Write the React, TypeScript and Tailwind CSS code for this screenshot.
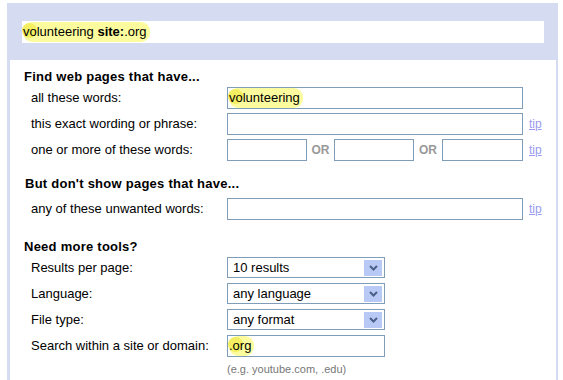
import React from "react";

const font = "font-['Liberation_Sans',Arial,sans-serif]";

const Highlight = ({ children }: { children: React.ReactNode }) => (
    <span className="relative inline-block rounded-[9px] bg-[#fcfc9e] pr-[3px]">
        <span className="absolute left-[-1px] top-[1px] h-[15px] w-[15px] rounded-full bg-[#f4ee62]" />
        <span className="relative">{children}</span>
    </span>
);

const Tip = () => (
    <a className="ml-[6px] text-[12px] text-[#9a9af0] underline" href="#">
        tip
    </a>
);

const TextBox = ({ w, children }: { w: string; children?: React.ReactNode }) => (
    <div className={`${w} flex h-[22px] items-center border border-[#7f9db9] bg-white pl-[1px] text-[13px] text-black`}>
        {children}
    </div>
);

const SelectBox = ({ value }: { value: string }) => (
    <div className="flex h-[21px] w-[158px] items-center justify-between border border-[#7f9db9] bg-white pl-[5px] pr-[2px] text-[13px] text-black">
        <span>{value}</span>
        <span className="flex h-[16px] w-[18px] items-center justify-center bg-[#b8c9f6]">
            <svg width="9" height="6" viewBox="0 0 9 6">
                <path d="M1 1 L4.5 4.5 L8 1" fill="none" stroke="#4a5f86" strokeWidth="2" />
            </svg>
        </span>
    </div>
);

const Row = ({ label, children }: { label: string; children: React.ReactNode }) => (
    <div className="flex h-[26px] items-start">
        <div className="flex h-[22px] w-[196px] items-center text-[13px] text-black">{label}</div>
        <div className="flex items-center">{children}</div>
    </div>
);

const Heading = ({ text, className }: { text: string; className: string }) => (
    <h2 className={`${className} h-[16px] text-[13px] font-bold leading-[16px] tracking-[0.25px] text-black`}>{text}</h2>
);

const App = () => {
    return (
        <main className={`${font} h-[380px] w-[563px] overflow-hidden bg-white pl-[7px] pr-[5px] pt-[3px]`}>
            <div className="flex h-full flex-col bg-[#d5dcf2]">
                <div className="mx-[15px] mr-[14px] mt-[18px] flex h-[22px] items-center bg-white pl-[1px] text-[13px] text-black">
                    <Highlight>
                        volunteering <b>site:</b>.org
                    </Highlight>
                </div>
                <section className="ml-[3px] mr-[2px] mt-[17px] flex-1 bg-white pl-[14px] pt-[9px]">
                    <Heading text="Find web pages that have..." className="" />
                    <div className="mt-[2px] pl-[7px]">
                        <Row label="all these words:">
                            <TextBox w="w-[296px]">
                                <Highlight>volunteering</Highlight>
                            </TextBox>
                        </Row>
                        <Row label="this exact wording or phrase:">
                            <TextBox w="w-[296px]" />
                            <Tip />
                        </Row>
                        <Row label="one or more of these words:">
                            <TextBox w="w-[80px]" />
                            <span className="w-[27px] text-center text-[12px] font-bold text-[#999]">OR</span>
                            <TextBox w="w-[80px]" />
                            <span className="w-[28px] text-center text-[12px] font-bold text-[#999]">OR</span>
                            <TextBox w="w-[81px]" />
                            <Tip />
                        </Row>
                    </div>
                    <Heading text="But don't show pages that have..." className="ml-[1px] mt-[11px]" />
                    <div className="mt-[6px] pl-[7px]">
                        <Row label="any of these unwanted words:">
                            <TextBox w="w-[296px]" />
                            <Tip />
                        </Row>
                    </div>
                    <Heading text="Need more tools?" className="mt-[15px]" />
                    <div className="mt-[2px] pl-[7px]">
                        <Row label="Results per page:">
                            <SelectBox value="10 results" />
                        </Row>
                        <Row label="Language:">
                            <SelectBox value="any language" />
                        </Row>
                        <Row label="File type:">
                            <SelectBox value="any format" />
                        </Row>
                        <Row label="Search within a site or domain:">
                            <TextBox w="w-[158px]">
                                <Highlight>.org</Highlight>
                            </TextBox>
                        </Row>
                        <div className="ml-[196px] text-[11px] text-[#777]">(e.g. youtube.com, .edu)</div>
                    </div>
                </section>
            </div>
        </main>
    );
};

export default App;
